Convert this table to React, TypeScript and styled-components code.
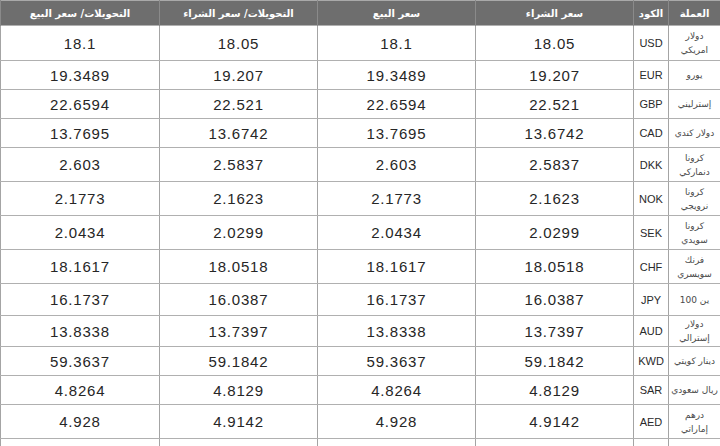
import styled, { createGlobalStyle } from "styled-components";

const GlobalStyle = createGlobalStyle`
  html, body {
    margin: 0;
    padding: 0;
    background: #ffffff;
    overflow: hidden;
  }
`;

const Wrapper = styled.div`
  width: 720px;
  height: 446px;
  overflow: hidden;
  font-family: "Liberation Sans", "DejaVu Sans", sans-serif;
`;

const Table = styled.table`
  width: 720px;
  table-layout: fixed;
  border-collapse: collapse;
  direction: rtl;
  border-top: 1px solid #a9a9a9;
`;

const HeadCell = styled.th`
  height: 24px;
  padding: 0;
  background-color: #6e6e6e;
  color: #ffffff;
  font-family: "DejaVu Sans", sans-serif;
  font-size: 10px;
  font-weight: bold;
  text-align: center;
  border-left: 1px solid #8a8a8a;
  border-right: 1px solid #8a8a8a;
`;

const Row = styled.tr<{ $h: number }>`
  height: ${({ $h }) => $h}px;
`;

const Cell = styled.td`
  padding: 0;
  text-align: center;
  vertical-align: middle;
  border: 1px solid #b0b0b0;
  border-left-color: #a4a4a4;
  color: #262626;
`;

const NameCell = styled(Cell)`
  font-family: "DejaVu Sans", sans-serif;
  font-size: 9px;
  line-height: 14px;
  color: #4a4a4a;
  white-space: nowrap;
`;

const CodeCell = styled(Cell)`
  font-size: 11px;
  color: #2a2a2a;
`;

const NumCell = styled(Cell)`
  font-size: 15px;
  letter-spacing: 0.8px;
  direction: ltr;
`;

type Rate = {
  name: string[];
  code: string;
  buy: string;
  sell: string;
  h: number;
};

const rates: Rate[] = [
  { name: ["دولار", "امريكي"], code: "USD", buy: "18.05", sell: "18.1", h: 35 },
  { name: ["يورو"], code: "EUR", buy: "19.207", sell: "19.3489", h: 29 },
  { name: ["إسترليني"], code: "GBP", buy: "22.521", sell: "22.6594", h: 29 },
  { name: ["دولار كندي"], code: "CAD", buy: "13.6742", sell: "13.7695", h: 29 },
  { name: ["كرونا", "دنماركي"], code: "DKK", buy: "2.5837", sell: "2.603", h: 34 },
  { name: ["كرونا", "نرويجي"], code: "NOK", buy: "2.1623", sell: "2.1773", h: 34 },
  { name: ["كرونا", "سويدي"], code: "SEK", buy: "2.0299", sell: "2.0434", h: 34 },
  { name: ["فرنك", "سويسري"], code: "CHF", buy: "18.0518", sell: "18.1617", h: 34 },
  { name: ["ين 100"], code: "JPY", buy: "16.0387", sell: "16.1737", h: 32 },
  { name: ["دولار", "إسترالي"], code: "AUD", buy: "13.7397", sell: "13.8338", h: 31 },
  { name: ["دينار كويتي"], code: "KWD", buy: "59.1842", sell: "59.3637", h: 29 },
  { name: ["ريال سعودي"], code: "SAR", buy: "4.8129", sell: "4.8264", h: 29 },
  { name: ["درهم", "إماراتي"], code: "AED", buy: "4.9142", sell: "4.928", h: 34 },
];

export default function App() {
  return (
    <Wrapper>
      <GlobalStyle />
      <Table>
        <colgroup>
          <col style={{ width: 52 }} />
          <col style={{ width: 35 }} />
          <col style={{ width: 158 }} />
          <col style={{ width: 158 }} />
          <col style={{ width: 158 }} />
          <col style={{ width: 159 }} />
        </colgroup>
        <thead>
          <tr>
            <HeadCell>العملة</HeadCell>
            <HeadCell>الكود</HeadCell>
            <HeadCell>سعر الشراء</HeadCell>
            <HeadCell>سعر البيع</HeadCell>
            <HeadCell>التحويلات/ سعر الشراء</HeadCell>
            <HeadCell>التحويلات/ سعر البيع</HeadCell>
          </tr>
        </thead>
        <tbody>
          {rates.map((r) => (
            <Row key={r.code} $h={r.h}>
              <NameCell>
                {r.name.map((line, i) => (
                  <div key={i}>{line}</div>
                ))}
              </NameCell>
              <CodeCell>{r.code}</CodeCell>
              <NumCell>{r.buy}</NumCell>
              <NumCell>{r.sell}</NumCell>
              <NumCell>{r.buy}</NumCell>
              <NumCell>{r.sell}</NumCell>
            </Row>
          ))}
          <Row $h={30}>
            <NameCell />
            <CodeCell />
            <NumCell />
            <NumCell />
            <NumCell />
            <NumCell />
          </Row>
        </tbody>
      </Table>
    </Wrapper>
  );
}
